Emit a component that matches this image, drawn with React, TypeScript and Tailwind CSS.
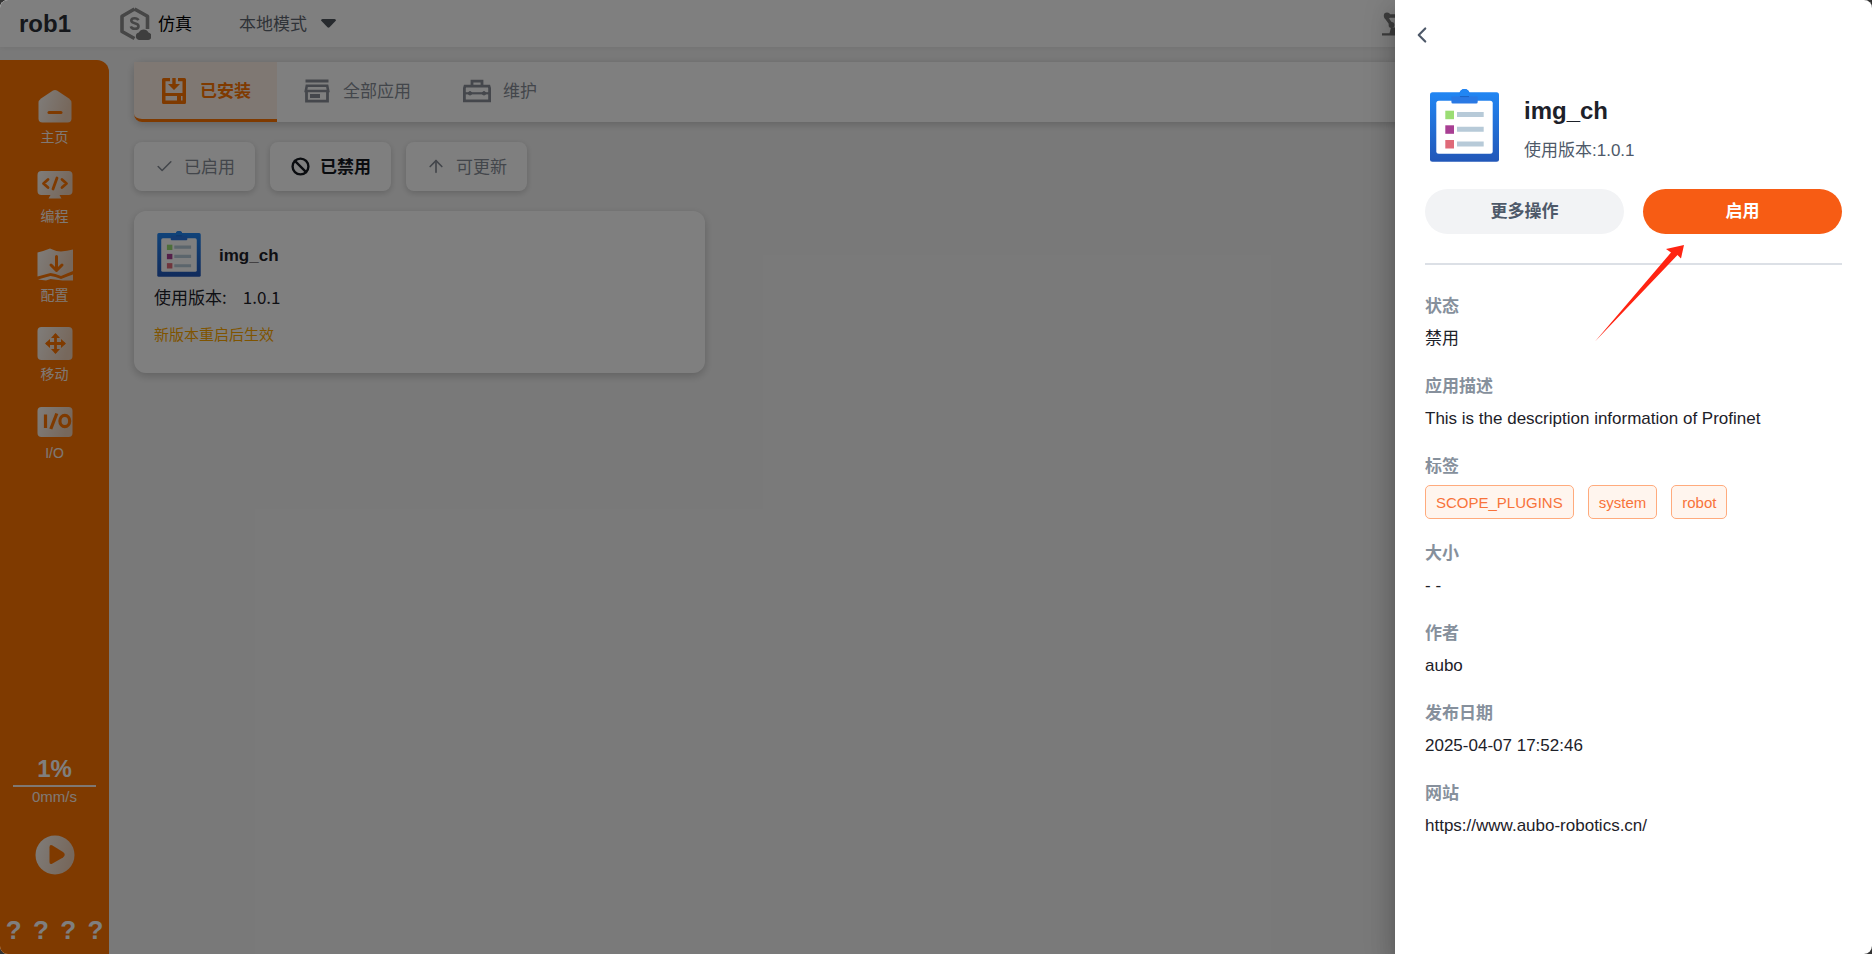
import React from "react";
import { ArrowUp, Ban, Check, ChevronLeft } from "lucide-react";

function ClipboardIcon({ className, id }: { className: string; id: string }) {
  return (
    <svg viewBox="0 0 69 73" className={className} aria-hidden="true">
      <defs>
        <linearGradient id={id} x1="0" y1="0" x2="0" y2="1">
          <stop offset="0" stopColor="#2186f3" />
          <stop offset="1" stopColor="#2257b8" />
        </linearGradient>
      </defs>
      <rect x="0" y="3.3" width="69" height="69.4" rx="2.5" fill={`url(#${id})`} />
      <rect x="6.3" y="11.7" width="56.4" height="53" rx="2.5" fill="#fff" />
      <path d="M29.5 4.5a5 4.5 0 0 1 10 0v3h8.2V13a1.5 1.5 0 0 1-1.5 1.5H23A1.5 1.5 0 0 1 21.4 13V7.500h8.100z" fill="#2a79e4" />
      <path d="M29.500 5a5 5 0 0 1 10 0v2.200h-10z" fill="#2186f3" />
      <path d="M30 7.600h9" stroke="#1a62c4" strokeWidth="1" />
      <rect x="15.300" y="21.700" width="8.700" height="8.500" fill="#9bdd74" />
      <rect x="15.300" y="36.300" width="8.700" height="8.500" fill="#a83f93" />
      <rect x="15.300" y="51" width="8.700" height="8.500" fill="#df6a79" />
      <path d="M27 25.500h26.700M27 40.200h26.700M27 55.100h26.700" stroke="#b7cad8" strokeWidth="5" />
    </svg>
  );
}

const FADE = "url(#nav-fade)";

function NavFade() {
  return (
    <svg width="0" height="0" className="absolute" aria-hidden="true">
      <defs>
        <linearGradient id="nav-fade" x1="0" y1="0" x2="1" y2="0.3">
          <stop offset="0" stopColor="#fffaf5" />
          <stop offset="1" stopColor="#eed0b8" />
        </linearGradient>
      </defs>
    </svg>
  );
}

const NAV = [
  {
    label: "主页",
    icon: (
      <>
        <path d="M16 2.600a4 4 0 0 1 4 0l12 8q2.500 1.800 2.500 4.500V30.500a4 4 0 0 1-4 4h-25a4 4 0 0 1-4-4V15.100q0-2.700 2.500-4.500z" fill={FADE} />
        <path d="M12 24.500h12" stroke="#ff7400" strokeWidth="3" strokeLinecap="round" />
      </>
    ),
  },
  {
    label: "编程",
    icon: (
      <>
        <path d="M4.500 4h27a4 4 0 0 1 4 4v16a4 4 0 0 1-4 4H22.500l2 3.500h-13l2-3.500H4.500a4 4 0 0 1-4-4V8a4 4 0 0 1 4-4z" fill={FADE} />
        <path d="M11 12.500l-4.500 4 4.500 4M25 12.500l4.500 4-4.500 4M20 11l-4 11" fill="none" stroke="#ff7400" strokeWidth="2.800" strokeLinecap="round" strokeLinejoin="round" />
      </>
    ),
  },
  {
    label: "配置",
    icon: (
      <>
        <path d="M.500 6.500Q7 5 13 2.500Q19 5.500 24 5.500Q30 5 36 3.500V25Q31 27 24 30Q18 27.500 13.500 27Q7 28.500.500 30.500z" fill={FADE} />
        <path d="M1 33.500Q7 31.500 13.500 30Q18 30.500 24 33Q31 30 36 28.500V34.500H25.500L13.500 33L9 34.500z" fill={FADE} />
        <path d="M19.500 10.500V24M14 19l5.500 5.500L25 19" fill="none" stroke="#ff7400" strokeWidth="3" strokeLinecap="round" strokeLinejoin="round" />
      </>
    ),
  },
  {
    label: "移动",
    icon: (
      <>
        <rect x=".5" y="2" width="35" height="33" rx="4" fill={FADE} />
        <path d="M9.500 18.500h18M18.500 9.500v18" stroke="#ff7400" strokeWidth="2.800" />
        <path d="M18.500 8l4.500 5h-9zM18.500 29l4.500-5h-9zM8 18.500l5-4.500v9zM29 18.500l-5-4.500v9z" fill="#ff7400" />
      </>
    ),
  },
  {
    label: "I/O",
    icon: (
      <>
        <rect x=".5" y="3" width="35" height="30" rx="4" fill={FADE} />
        <path d="M8.500 10.500v13.500M19.800 9.500l-6 15.500" stroke="#ff7400" strokeWidth="3.200" />
        <ellipse cx="27.800" cy="17" rx="4.900" ry="5.600" fill="none" stroke="#ff7400" strokeWidth="3.200" />
      </>
    ),
  },
];

function Sidebar() {
  return (
    <nav className="flex w-[109px] shrink-0 flex-col items-center rounded-tr-xl bg-[#ff7400] text-white">
      <NavFade />
      <ul className="flex w-full flex-col pt-7">
        {NAV.map((n) => (
          <li key={n.label} className="h-[79px]">
            <button type="button" className="flex w-full flex-col items-center gap-[3px]">
              <svg viewBox="0 0 36 36" className="size-9" aria-hidden="true">{n.icon}</svg>
              <span className="text-sm leading-5 text-[#fff3ea]">{n.label}</span>
            </button>
          </li>
        ))}
      </ul>
      <div className="mt-auto flex w-[83px] flex-col items-center">
        <strong className="text-2xl leading-8">1%</strong>
        <span className="w-full border-t-2 border-white/90 text-center text-[15px] leading-5 text-[#fff3ea]">0mm/s</span>
      </div>
      <button type="button" aria-label="播放" className="mt-7">
        <svg viewBox="0 0 40 40" className="size-10">
          <circle cx="20" cy="20" r="19.500" fill={FADE} />
          <path d="M14.500 12.500q0-3.500 3-2L28 17q3.500 2.500 0 5.500L17.500 28.500q-3 1.500-3-1.500z" fill="#ff7400" />
        </svg>
      </button>
      <div className="mt-[35px] mb-1 grid w-full grid-cols-4 text-center text-[26px] leading-10 font-bold">
        {[0, 1, 2, 3].map((i) => (
          <span key={i}>?</span>
        ))}
      </div>
    </nav>
  );
}

function Header() {
  return (
    <header className="flex h-[47px] shrink-0 items-center bg-white pl-[19px] shadow-[0_0_6px_rgba(0,0,0,0.08)]">
      <h1 className="w-[101px] text-2xl font-bold text-[#2b2f36]">rob1</h1>
      <div className="flex w-[119px] items-center gap-[7px]">
        <svg viewBox="0 0 31 34" className="h-[34px] w-[31px]" aria-hidden="true">
          <path d="M14.500 2L27.500 9.200V22M14.500 2L2 9.200V24.500L14.500 31.500" fill="none" stroke="#8c8c8c" strokeWidth="3.600" strokeLinejoin="round" />
          <path d="M18.300 13.300q-.8-2-3.700-2-3.300 0-3.300 2.300 0 1.900 3.400 2.600 3.800.8 3.800 3 0 2.600-3.700 2.600-3.300 0-4-2.400" fill="none" stroke="#8c8c8c" strokeWidth="2.600" />
          <path d="M19 33a3.900 3.900 0 0 1-.2-7.600 5.500 5.500 0 0 1 9.700 0A3.900 3.900 0 0 1 28.300 33z" fill="#7c7c7c" />
        </svg>
        <span className="mt-[2px] text-[17px] text-black">仿真</span>
      </div>
      <button type="button" className="flex items-center gap-[14px] text-[17px] text-[#5f6670]">
        <span className="mt-[2px]">本地模式</span>
        <svg viewBox="0 0 15 9" className="h-[9px] w-[15px]" aria-hidden="true">
          <path d="M0 1.500Q0 0 1.500 0h12Q15 0 15 1.500L8.500 8.300q-1 .9-2 0z" fill="#4e545c" />
        </svg>
      </button>
      <div className="ml-auto w-[490px]">
        <svg viewBox="0 0 30 24" className="h-6 w-[30px]" aria-hidden="true">
          <path d="M0 23.500V21.200h7.500L9 15.500h5l2 5.700h4v2.300zM2.500 6L6 5l5 7-3 1.500zM5 2.300h15V5.800H5z" fill="#7a7a7a" />
          <circle cx="5" cy="3.800" r="3.200" fill="#7a7a7a" />
          <circle cx="9.500" cy="13" r="2.900" fill="#7a7a7a" />
        </svg>
      </div>
    </header>
  );
}

const TABS = [
  {
    label: "已安装",
    icon: (
      <svg viewBox="0 0 24 26" className="h-[26px] w-6 overflow-visible" aria-hidden="true">
        <path fillRule="evenodd" fill="#ff7400" d="M1.500 0H8v3.300H3.500V15h17V3.300H16V0h6.500Q24 0 24 1.500v23q0 1.500-1.500 1.500h-21Q0 26 0 24.500v-23Q0 0 1.500 0zM3.500 18v4.500h11.500V18zM19 18v4.500h1.500V18z" />
        <path d="M10.300 0h3.400v6H18l-6 6-6-6h4.300z" fill="#ff7400" />
      </svg>
    ),
  },
  {
    label: "全部应用",
    icon: (
      <svg viewBox="0 0 24 24" className="size-6 overflow-visible" fill="none" stroke="#8a8f98" aria-hidden="true">
        <path d="M.500 2h23M1.500 11.500v10.700h21V11.500" strokeWidth="2.800" />
        <path d="M1.800 6.800h20.400l1 5.200H.800z" strokeWidth="2.600" />
        <path d="M5 17h10" strokeWidth="4" />
      </svg>
    ),
  },
  {
    label: "维护",
    icon: (
      <svg viewBox="0 0 24 24" className="size-6 overflow-visible" fill="none" stroke="#8a8f98" aria-hidden="true">
        <path d="M0 7.200h24l.6 2v12.600H-.600V9.200z" strokeWidth="2.800" />
        <path d="M7 7V2.200h10V7" strokeWidth="2.800" />
        <path d="M0 14.300h24" strokeWidth="2.200" />
        <circle cx="5" cy="14.300" r="1.700" fill="#8a8f98" />
        <circle cx="19" cy="14.300" r="1.700" fill="#8a8f98" />
      </svg>
    ),
  },
];

const FILTERS = [
  { label: "已启用", Icon: Check, size: 19, stroke: 2 },
  { label: "已禁用", Icon: Ban, size: 19, stroke: 3 },
  { label: "可更新", Icon: ArrowUp, size: 21, stroke: 2 },
];

function Content() {
  return (
    <main className="flex min-w-0 flex-1 flex-col pt-[2px] pl-[25px]">
      <div role="tablist" className="flex h-[60px] items-stretch rounded-lg bg-white shadow-[0_2px_8px_rgba(0,0,0,0.2)]">
        {TABS.map((t, i) => (
          <button
            key={t.label}
            type="button"
            role="tab"
            aria-selected={i === 0}
            className={
              "flex items-center gap-[14px] border-b-3 pr-[26px] pl-7 text-[17px] " +
              (i === 0
                ? "rounded-bl-lg border-[#ff7400] bg-[#fff0e6] font-bold text-[#ff7400]"
                : "border-transparent text-[#868c96]")
            }
          >
            {t.icon}
            <span className="mt-[3px]">{t.label}</span>
          </button>
        ))}
      </div>
      <div className="mt-5 flex gap-[15px]">
        {FILTERS.map(({ label, Icon, size, stroke }, i) => (
          <button
            key={label}
            type="button"
            className={
              "flex h-[49px] items-center gap-[10px] rounded-lg bg-white px-5 text-[17px] shadow-[0_2px_6px_rgba(0,0,0,0.18)] " +
              (i === 1 ? "font-bold text-[#15181f]" : "text-[#868c96]")
            }
          >
            <span className="flex w-5 justify-center">
              <Icon size={size} strokeWidth={stroke} />
            </span>
            <span className="mt-[3px]">{label}</span>
          </button>
        ))}
      </div>
      <article className="mt-5 h-[162px] w-[571px] rounded-xl bg-white px-5 pt-5 text-[17px] text-[#1d2129] shadow-[0_3px_8px_rgba(0,0,0,0.2)]">
        <div className="flex items-center gap-[18px] pl-[3px]">
          <ClipboardIcon id="clip-small" className="h-[46px] w-11" />
          <h2 className="mt-1 font-bold">img_ch</h2>
        </div>
        <p className="mt-[7px] flex gap-4 font-['Noto_Sans_CJK_SC',sans-serif] leading-[26px]">
          <span>使用版本:</span>
          <span>1.0.1</span>
        </p>
        <p className="mt-[14px] text-[15px] leading-[22px] text-[#ffa800]">新版本重启后生效</p>
      </article>
    </main>
  );
}

function Field({ label, children }: { label: string; children: React.ReactNode }) {
  return (
    <div className="mb-[22px]">
      <dt className="mb-[5px] leading-[26px] font-bold text-[#86909c]">{label}</dt>
      <dd className="leading-[27px] text-[#1d2129]">{children}</dd>
    </div>
  );
}

function Drawer() {
  return (
    <aside
      role="dialog"
      aria-label="img_ch"
      className="absolute inset-y-0 right-0 w-[477px] rounded-r-lg bg-white px-[30px] pt-[22px] text-[17px] shadow-[0_8px_10px_-5px_rgba(0,0,0,0.2),0_16px_24px_2px_rgba(0,0,0,0.14),0_6px_30px_5px_rgba(0,0,0,0.12)]"
    >
      <button type="button" aria-label="返回" className="-ml-4 flex text-[#4e5969]">
        <ChevronLeft size={26} strokeWidth={2} />
      </button>
      <div className="mt-9 flex items-center gap-[25px] pl-[5px]">
        <ClipboardIcon id="clip-large" className="h-[73px] w-[69px]" />
        <div className="pt-[7px]">
          <h2 className="text-2xl leading-10 font-bold text-[#1d2129]">img_ch</h2>
          <p className="mt-1 leading-8 text-[#4e5969]">使用版本:1.0.1</p>
        </div>
      </div>
      <div className="mt-[22px] flex gap-[19px] font-bold">
        <button type="button" className="h-[45px] flex-1 rounded-full bg-[#f2f3f5] text-[#4e5969]">更多操作</button>
        <button type="button" className="h-[45px] flex-1 rounded-full bg-[#f75c14] text-white">启用</button>
      </div>
      <hr className="mt-[29px] mb-[29px] border-t-2 border-[#dce0e6]" />
      <dl>
        <Field label="状态">禁用</Field>
        <Field label="应用描述">This is the description information of Profinet</Field>
        <Field label="标签">
          <span className="flex gap-[14px]">
            {["SCOPE_PLUGINS", "system", "robot"].map((t) => (
              <span key={t} className="h-[34px] rounded-[5px] border border-[#ffab7d] bg-[#fff5ee] px-[10px] text-[15px] leading-[34px] text-[#f8733a]">
                {t}
              </span>
            ))}
          </span>
        </Field>
        <Field label="大小">- -</Field>
        <Field label="作者">aubo</Field>
        <Field label="发布日期">2025-04-07 17:52:46</Field>
        <Field label="网站">
          <a href="https://www.aubo-robotics.cn/">https://www.aubo-robotics.cn/</a>
        </Field>
      </dl>
      <svg viewBox="0 0 90 97" className="pointer-events-none absolute top-[245px] left-[200px] h-[97px] w-[90px]" aria-hidden="true">
        <path d="M0 96.500L76 7.500L71 4L89 0L86 13.500L82.500 10z" fill="#ff2412" />
      </svg>
    </aside>
  );
}

export default function App() {
  return (
    <div className="h-screen bg-[#333] font-['Liberation_Sans','Noto_Sans_CJK_SC',sans-serif]">
      <div className="relative flex h-full flex-col overflow-hidden rounded-lg bg-[#f3f3f3]">
        <Header />
        <div className="flex min-h-0 flex-1 pt-[13px]">
          <Sidebar />
          <Content />
        </div>
        <div className="absolute inset-0 bg-black/50" />
        <Drawer />
      </div>
    </div>
  );
}
